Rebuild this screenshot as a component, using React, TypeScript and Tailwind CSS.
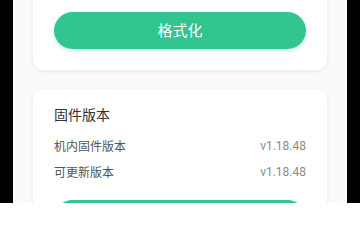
export default function App() {
  const rows = [
    { label: '机内固件版本', value: 'v1.18.48' },
    { label: '可更新版本', value: 'v1.18.48' },
  ]

  return (
    <div className="h-[203px] w-[360px] overflow-hidden bg-black">
      <div
        className="mx-[13px] h-full overflow-hidden bg-[#fafafa] px-[20px]"
        style={{ fontFamily: '"Noto Sans CJK SC", "Noto Sans", sans-serif' }}
      >
        {/* Format card */}
        <div className="-mt-[20px] rounded-[10px] bg-white px-[21px] pb-[21px] pt-[32px] shadow-[0_1px_4px_rgba(0,0,0,0.08)]">
          <button className="flex h-[37px] w-full items-center justify-center rounded-full bg-[#33c590] text-[15px] text-white shadow-[0_2px_4px_rgba(51,197,144,0.25)]">
            格式化
          </button>
        </div>

        {/* Firmware card */}
        <div className="mt-[19px] rounded-[10px] bg-white px-[21px] pt-[14px] pb-[20px] shadow-[0_1px_4px_rgba(0,0,0,0.08)]">
          <div className="text-[14px] leading-[22px] text-[#333]">固件版本</div>
          <div className="mt-[8px] flex flex-col">
            {rows.map((r) => (
              <div key={r.label} className="flex h-[26px] items-center justify-between text-[12px]">
                <span className="text-[#555]">{r.label}</span>
                <span className="text-[#8a8a8a]" style={{ fontFamily: '"Roboto", "Noto Sans", sans-serif' }}>
                  {r.value}
                </span>
              </div>
            ))}
          </div>
          <div className="mt-[15px] h-[37px] w-full rounded-full bg-[#33c590]" />
        </div>
      </div>
    </div>
  )
}
